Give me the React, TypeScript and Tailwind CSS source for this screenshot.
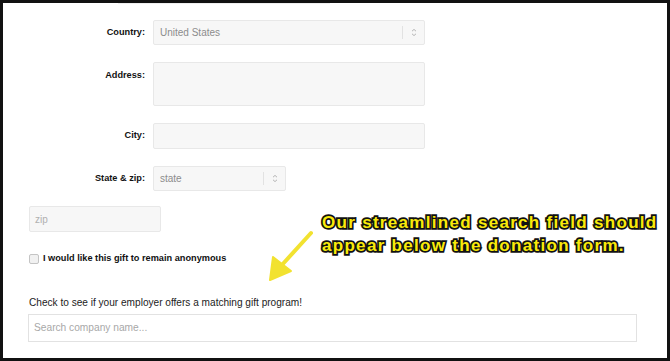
import type { ReactNode } from "react";

const Chevrons = () => (
  <svg width="6" height="9" viewBox="0 0 6 9" fill="none" stroke="#b5b5b5" strokeWidth="1">
    <path d="M1 3.2 L3 1.4 L5 3.2" />
    <path d="M1 5.8 L3 7.6 L5 5.8" />
  </svg>
);

const Select = ({ value, className }: { value: string; className: string }) => (
  <div
    className={`flex h-[25px] items-center rounded-[2px] border border-[#e8e8e8] bg-[#f7f7f7] text-[10px] text-[#8c8c8c] ${className}`}
  >
    <span className="flex-1 pl-[6px]">{value}</span>
    <span className="h-[13px] w-px bg-[#e2e2e2]" />
    <span className="flex w-[21px] justify-center">
      <Chevrons />
    </span>
  </div>
);

const Row = ({ label, children, top = false }: { label: string; children: ReactNode; top?: boolean }) => (
  <div className={`flex gap-[8px] ${top ? "items-start" : "items-center"}`}>
    <label className={`w-[116px] text-right text-[9.2px] font-bold text-[#111] ${top ? "pt-[7px]" : ""}`}>{label}</label>
    {children}
  </div>
);

export default function App() {
  return (
    <div className="relative h-[361px] w-[670px] overflow-hidden border-[3px] border-[#111] bg-white font-['Liberation_Sans',Arial,sans-serif]">
      <div className="ml-[115px] h-px w-[212px] bg-[#eeeeee]" />

      <div className="flex flex-col pl-[26px] pt-[16px]">
        <div className="flex flex-col gap-[17px]">
          <Row label="Country:">
            <Select value="United States" className="w-[272px]" />
          </Row>
          <Row label="Address:" top>
            <div className="h-[44px] w-[272px] rounded-[2px] border border-[#e8e8e8] bg-[#f7f7f7]" />
          </Row>
          <Row label="City:">
            <div className="h-[26px] w-[272px] rounded-[2px] border border-[#e8e8e8] bg-[#f7f7f7]" />
          </Row>
          <Row label="State & zip:">
            <Select value="state" className="w-[133px]" />
          </Row>
        </div>

        <div className="mt-[15px] flex h-[26px] w-[132px] items-center rounded-[2px] border border-[#e8e8e8] bg-[#f7f7f7] pl-[5px] text-[10px] text-[#b0b0b0]">
          zip
        </div>

        <label className="mt-[20px] flex items-center gap-[4px] text-[9.2px] font-bold text-[#111]">
          <span className="h-[10px] w-[10px] rounded-[2px] border border-[#c4c4c4] bg-[#f1f1f1]" />
          I would like this gift to remain anonymous
        </label>

        <p className="mt-[29px] text-[10.1px] text-[#222]">Check to see if your employer offers a matching gift program!</p>

        <div className="mt-[4px] flex h-[28px] w-[609px] -translate-x-px items-center border border-[#e2e2e2] bg-white pl-[5px] text-[10.2px] text-[#a8a8a8]">
          Search company name...
        </div>
      </div>

      {/* annotation overlay */}
      <div className="absolute left-[319px] top-[208px] text-[17px] font-bold leading-[23px] tracking-[1.3px] text-[#f9ea0a] [-webkit-text-stroke:3.5px_#111] [paint-order:stroke_fill]">
        <p>Our streamlined search field should</p>
        <p>appear below the donation form.</p>
      </div>
      <svg className="absolute left-[258px] top-[224px]" width="60" height="60" viewBox="0 0 60 60">
        <path d="M50 6 L20 39" stroke="#f2e230" strokeWidth="4" strokeLinecap="round" />
        <path d="M9 53 L12 30 L30 44 Z" fill="#f2e230" stroke="#f2e230" strokeWidth="2" strokeLinejoin="round" />
      </svg>
    </div>
  );
}
